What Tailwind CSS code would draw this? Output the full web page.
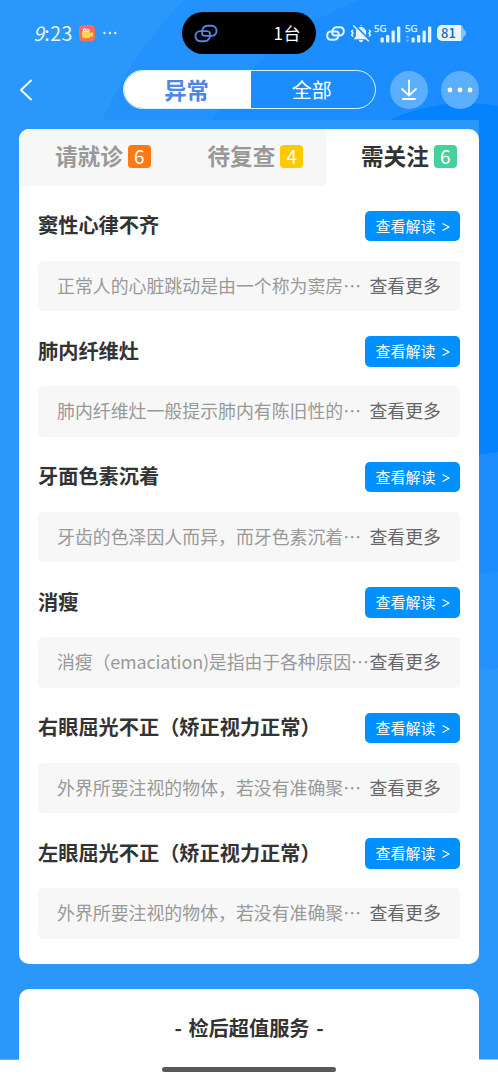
<!DOCTYPE html>
<html lang="zh-CN">
<head>
<meta charset="utf-8">
<title>体检异常</title>
<script src="https://cdn.jsdelivr.net/npm/@tailwindcss/browser@4"></script>
</head>
<body class="bg-white">
<div class="relative isolate flex h-[1080px] w-[498px] flex-col overflow-hidden font-['Noto_Sans_CJK_SC',sans-serif] text-[#333]">
  <!-- background rings -->
  <svg class="absolute inset-0 -z-10" width="498" height="1080" viewBox="0 0 498 1080">
    <rect width="498" height="1059.5" fill="#2a97fa"/>
    <circle cx="461" cy="278" r="392" fill="#2492fc"/>
    <circle cx="462" cy="278" r="296" fill="#1b8dff"/>
    <circle cx="465" cy="279" r="176" fill="#0582fe"/>
    <rect x="0" y="120" width="479" height="939.5" fill="#2a97fa"/>
  </svg>

  <!-- status bar -->
  <header class="flex h-[66px] items-center pl-[33px] text-[#e4f5ff]">
    <span class="w-[46px] text-[19.500px] leading-[30px] tracking-[0.500px] whitespace-nowrap"><i>9</i>:23</span>
    <svg width="16" height="17" viewBox="0 0 16 17">
      <rect width="16" height="16.5" rx="4.500" fill="#f2705c"/>
      <path d="M3 7.500Q3 5.500 5 6h4.500q2 0 2 2l2.500-.8v4.500l-2.500-.5q-.5 2-2.500 2H5.500Q3 13.200 3 10.500z" fill="#ffd34d"/>
      <circle cx="5.500" cy="5" r="1.700" fill="#fff"/><circle cx="8.900" cy="5.300" r="1.500" fill="#fff"/>
      <circle cx="5.700" cy="5.100" r=".7" fill="#b04838"/><circle cx="8.900" cy="5.300" r=".6" fill="#b04838"/>
    </svg>
    <svg class="ml-2" width="14" height="4" viewBox="0 0 14 4" fill="currentColor"><circle cx="1.500" cy="2" r="1.200"/><circle cx="7" cy="2" r="1.200"/><circle cx="12.300" cy="2" r="1.200"/></svg>
    <div class="ml-[65px] flex h-[42px] w-[134px] shrink-0 items-center justify-between rounded-full bg-black pr-[15px] pl-[12px] text-[17px] text-white">
      <svg width="24" height="19" viewBox="0 0 24 19" fill="none" stroke="#5586e2" stroke-width="1.900" stroke-linecap="round"><path d="M8.200 9.500C7.500 5 9.500 1.700 13.500 1.700h4c6.700 0 6.700 10.200 0 10.200H11c-1.600 0-2.600-.8-3-2"/><path d="M15.800 9.500c.7 4.500-1.300 7.800-5.300 7.800h-4c-6.700 0-6.700-10.200 0-10.200H13c1.600 0 2.600.8 3 2"/></svg>
      <span class="-mt-px tracking-[0.500px]">1台</span>
    </div>
    <svg class="ml-[10px] shrink-0" width="19" height="15" viewBox="0 0 24 19" fill="none" stroke="currentColor" stroke-width="2.500" stroke-linecap="round"><path d="M8.200 9.500C7.500 5 9.500 1.700 13.500 1.700h4c6.700 0 6.700 10.200 0 10.200H11c-1.600 0-2.600-.8-3-2"/><path d="M15.800 9.500c.7 4.500-1.300 7.800-5.300 7.800h-4c-6.700 0-6.700-10.200 0-10.200H13c1.600 0 2.600.8 3 2"/></svg>
    <svg class="ml-[5px] shrink-0" width="22" height="19" viewBox="0 0 22 19" fill="none">
      <path d="M11 1.300v1M5 14.500l1.600-2.500V8a4.400 4.400 0 0 1 8.800 0v4l1.600 2.500z" fill="currentColor" stroke="currentColor" stroke-width="1.300"/>
      <path d="M9 16.500h4l-2 1.500z" fill="currentColor" stroke="currentColor"/>
      <path d="M3 6L1.600 7.600 3 9.200 1.600 10.800 3 12.400M19 6l1.400 1.600L19 9.200l1.400 1.600L19 12.400" stroke="currentColor" stroke-width="1.500"/>
      <path d="M4.500 1L20 16.800" stroke="#1b8dff" stroke-width="2"/><path d="M3.200 1.500L18.800 17.300" stroke="currentColor" stroke-width="1.500"/>
    </svg>
    <svg class="ml-[2px] shrink-0 overflow-visible" width="27" height="19" viewBox="0 0 27 19" fill="currentColor"><text x="0" y="7.500" font-size="9.500" font-family="Noto Sans" stroke="currentColor" stroke-width=".25">5G</text><rect x="6.500" y="13.500" width="3.300" height="5" rx="1"/><rect x="12" y="11" width="3.300" height="7.500" rx="1"/><rect x="17.500" y="6.500" width="3.300" height="12" rx="1"/><rect x="23" y="2.500" width="3.300" height="16" rx="1"/></svg>
    <svg class="ml-[3.500px] shrink-0 overflow-visible" width="27" height="19" viewBox="0 0 27 19" fill="currentColor"><text x="0" y="7.500" font-size="9.500" font-family="Noto Sans" stroke="currentColor" stroke-width=".25">5G</text><path d="M.5 14L2.500 11l2 3zM.5 15.500h4l-2 3z" opacity=".4"/><rect x="6.500" y="13.500" width="3.300" height="5" rx="1"/><rect x="12" y="11" width="3.300" height="7.500" rx="1"/><rect x="17.500" y="6.500" width="3.300" height="12" rx="1"/><rect x="23" y="2.500" width="3.300" height="16" rx="1"/></svg>
    <div class="ml-[5px] flex shrink-0 items-center">
      <span class="flex h-[16px] w-[24px] items-center justify-center rounded-l-[5px] bg-[#e4f5ff] text-[13px] leading-[16px] font-medium text-[#1668b5]">81</span>
      <svg width="5" height="16" viewBox="0 0 5 16"><path d="M0 0q2 1 2.500 4l2.500 2.500v3L2.500 12Q2 15 0 16z" fill="#83c2ff"/></svg>
    </div>
  </header>

  <!-- navigation -->
  <nav class="flex h-[47px] items-center pl-[19px] text-white">
    <svg width="14" height="22" viewBox="0 0 14 22" fill="none" stroke="currentColor" stroke-width="1.900" stroke-linecap="round" stroke-linejoin="round"><path d="M12 1.500L2 11l10 9.500"/></svg>
    <div class="ml-[89.500px] flex h-[39px] w-[253.500px] shrink-0 overflow-hidden rounded-full border border-[#d9f3ff] text-[20px]">
      <div class="flex w-[127px] items-center justify-center bg-white pr-px text-[22.300px] font-bold text-[#4f86e4]">异常</div>
      <div class="flex flex-1 items-center justify-center pr-[2px]">全部</div>
    </div>
    <button class="ml-[14px] flex size-[38px] shrink-0 items-center justify-center rounded-full bg-[#5caeff]"><svg width="18" height="22" viewBox="0 0 18 22" fill="none" stroke="#fff" stroke-width="1.800" stroke-linecap="round"><path d="M9 1.500V16M2 10l7 6.500 7-6.500M3 20h12"/></svg></button>
    <button class="ml-[13px] flex size-[38px] shrink-0 items-center justify-center rounded-full bg-[#5caeff]"><svg width="26" height="6" viewBox="0 0 26 6" fill="#fff"><circle cx="3" cy="3" r="2.400"/><circle cx="13" cy="3" r="2.400"/><circle cx="23" cy="3" r="2.400"/></svg></button>
  </nav>

  <!-- findings -->
  <main class="mx-[19px] mt-[15.500px] h-[835px] shrink-0 overflow-hidden rounded-[10px] bg-white">
    <div class="flex h-[57px] text-[22.600px] leading-none font-bold text-[#999]">
      <div class="flex w-[153.500px] items-center gap-[5px] bg-[#f7f7f7] pb-[2px] pl-[36px]"><span>请就诊</span><span class="flex size-[23px] items-center justify-center rounded-[4px] bg-[#ff7813] pb-px text-[19px] font-normal text-white">6</span></div>
      <div class="flex w-[153.500px] items-center gap-[5px] bg-[#f7f7f7] pb-[2px] pl-[35px]"><span>待复查</span><span class="flex size-[23px] items-center justify-center rounded-[4px] bg-[#ffc800] pb-px text-[19px] font-normal text-white">4</span></div>
      <div class="flex flex-1 items-center gap-[5px] pb-[2px] pl-[35px] text-[#333]"><span>需关注</span><span class="flex size-[23px] items-center justify-center rounded-[4px] bg-[#46d09d] pb-px text-[19px] font-normal text-white">6</span></div>
    </div>
    <div id="list" class="px-[19px] pt-[25px]"></div>
  </main>

  <!-- services -->
  <section class="mx-[19px] mt-[25.500px] flex h-[91px] shrink-0 flex-col items-center rounded-t-[10px] bg-white">
    <h2 class="mt-[24px] text-[20.200px] leading-[30px] font-bold [word-spacing:2px] whitespace-nowrap">- 检后超值服务 -</h2>
    <div class="mt-[24px] h-[5px] w-[174px] rounded-full bg-[#595959]"></div>
  </section>
</div>

<template id="item">
  <article class="h-[125.500px]">
    <div class="flex h-[30px] items-center justify-between">
      <h3 class="text-[20.200px] leading-none font-bold whitespace-nowrap"></h3>
      <button class="mt-px flex h-[30.500px] w-[95px] items-center gap-[6px] rounded-[5px] bg-[#0090ff] pb-[2px] pl-[10.500px] text-[15px] leading-none whitespace-nowrap text-white"><span>查看解读</span><svg width="8" height="8" viewBox="0 0 8 8" class="mt-[3px]" fill="none" stroke="currentColor" stroke-width="1.300" stroke-linecap="round" stroke-linejoin="round"><path d="M1 .8L7 4 1 7.200"/></svg></button>
    </div>
    <div class="mt-[20px] flex h-[50.500px] items-center justify-between rounded-[5px] bg-[#f7f7f7] pr-[19px] pl-[19px] text-[17.900px] leading-none whitespace-nowrap"><p class="text-[#999]"></p><span class="text-[#666]">查看更多</span></div>
  </article>
</template>
<script>
const items = [
  ['窦性心律不齐', '正常人的心脏跳动是由一个称为窦房…'],
  ['肺内纤维灶', '肺内纤维灶一般提示肺内有陈旧性的…'],
  ['牙面色素沉着', '牙齿的色泽因人而异，而牙色素沉着…'],
  ['消瘦', '消瘦（emaciation)是指由于各种原因…'],
  ['右眼屈光不正（矫正视力正常）', '外界所要注视的物体，若没有准确聚…'],
  ['左眼屈光不正（矫正视力正常）', '外界所要注视的物体，若没有准确聚…']
];
const list = document.getElementById('list');
for (const [title, text] of items) {
  const node = document.getElementById('item').content.cloneNode(true);
  node.querySelector('h3').textContent = title;
  const p = node.querySelector('p');
  p.textContent = text;
  if (/[a-z]/.test(text)) p.classList.add('tracking-[-0.120px]');
  list.append(node);
}
</script>
</body>
</html>
